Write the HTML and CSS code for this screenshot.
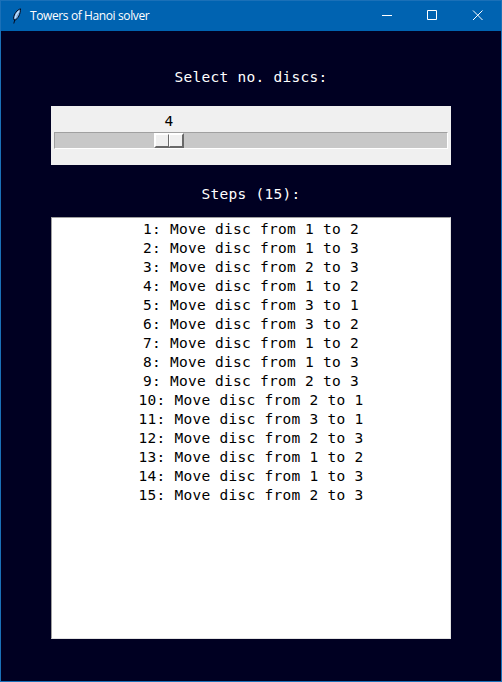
FILE: index.html
```html
<!DOCTYPE html>
<html lang="en">
<head>
<meta charset="utf-8">
<title>Towers of Hanoi solver</title>
<link rel="stylesheet" href="styles.css">
</head>
<body>
<div class="window">
  <header class="titlebar">
    <svg class="feather" width="10" height="16" viewBox="0 0 10 16">
      <path d="M8.500 .8C5 2 2 5.500 1.500 10.500L2.500 12.500C6 11 8.600 6 8.500 .8Z" fill="#78a9dc" stroke="#050c20"/>
      <path d="M7 3C5 5 3.700 7.500 3.200 10" fill="none" stroke="#c5e2ff" stroke-width="1.300"/>
      <path d="M3 11L1.800 15.500" fill="none" stroke="#050c20"/>
    </svg>
    <h1 class="title">Towers of Hanoi solver</h1>
    <svg class="control" width="46" height="30" viewBox="0 0 46 30"><path d="M18 14.500H28" /></svg>
    <svg class="control" width="45" height="30" viewBox="0 0 45 30"><path d="M17.500 9.500H26.500V18.500H17.500Z" /></svg>
    <svg class="control" width="46" height="30" viewBox="0 0 46 30"><path d="M18 9.500L27.500 19M27.500 9.500L18 19" /></svg>
  </header>
  <main class="content">
    <div class="label label-select">Select no. discs:</div>
    <div class="scale">
      <div class="value">4</div>
      <div class="trough"><div class="thumb"><i class="half"></i><i class="half"></i></div></div>
    </div>
    <div class="label label-steps">Steps (15):</div>
    <div class="steps">
      <div>1: Move disc from 1 to 2</div>
      <div>2: Move disc from 1 to 3</div>
      <div>3: Move disc from 2 to 3</div>
      <div>4: Move disc from 1 to 2</div>
      <div>5: Move disc from 3 to 1</div>
      <div>6: Move disc from 3 to 2</div>
      <div>7: Move disc from 1 to 2</div>
      <div>8: Move disc from 1 to 3</div>
      <div>9: Move disc from 2 to 3</div>
      <div>10: Move disc from 2 to 1</div>
      <div>11: Move disc from 3 to 1</div>
      <div>12: Move disc from 2 to 3</div>
      <div>13: Move disc from 1 to 2</div>
      <div>14: Move disc from 1 to 3</div>
      <div>15: Move disc from 2 to 3</div>
    </div>
  </main>
</div>
</body>
</html>
```
FILE: styles.css
```css
* { box-sizing: border-box; }
body { margin: 0; overflow: hidden; }
.window {
  width: 502px;
  height: 682px;
  border: 1px solid #1a70b8;
  background: #000022;
}
.titlebar {
  display: flex;
  align-items: center;
  height: 30px;
  padding-left: 11px;
  background: #0063b1;
  color: #fff;
}
.feather { margin-right: 8px; }
.title {
  flex: 1;
  margin: 0;
  font: 400 12px/30px "Open Sans", "Noto Sans", sans-serif;
  letter-spacing: -0.39px;
  white-space: nowrap;
}
.control { fill: none; stroke: #fff; stroke-width: 1; }
.content {
  display: flex;
  flex-direction: column;
  width: 400px;
  margin: 0 auto 0 50px;
  padding-top: 37px;
  font: 14.5px/19px "DejaVu Sans Mono", monospace;
  letter-spacing: 0.27px;
  text-align: center;
}
.label { color: #fff; }
.label-select { margin-bottom: 19px; }
.label-steps { margin: 20px 0 13px; }
.scale {
  height: 59px;
  padding: 6px 3px 0;
  background: #f0f0f0;
}
.value { width: 30px; margin-left: 100px; height: 20px; }
.trough {
  height: 17px;
  border: 1px solid #a0a0a0;
  border-right-color: #fff;
  border-bottom-color: #fff;
  background: #c8c8c8;
}
.thumb {
  display: flex;
  width: 30px;
  height: 15px;
  margin-left: 99px;
  border: 1px solid #fff;
  border-right-color: #696969;
  border-bottom-color: #696969;
}
.half {
  flex: 1;
  border: 1px solid #fff;
  border-right-color: #696969;
  border-bottom-color: #696969;
  background: #f0f0f0;
}
.steps {
  height: 422px;
  padding-top: 2px;
  border: 1px solid #a0a0a0;
  border-right-color: #e3e3e3;
  border-bottom-color: #e3e3e3;
  background: #fff;
  color: #000;
}
```
